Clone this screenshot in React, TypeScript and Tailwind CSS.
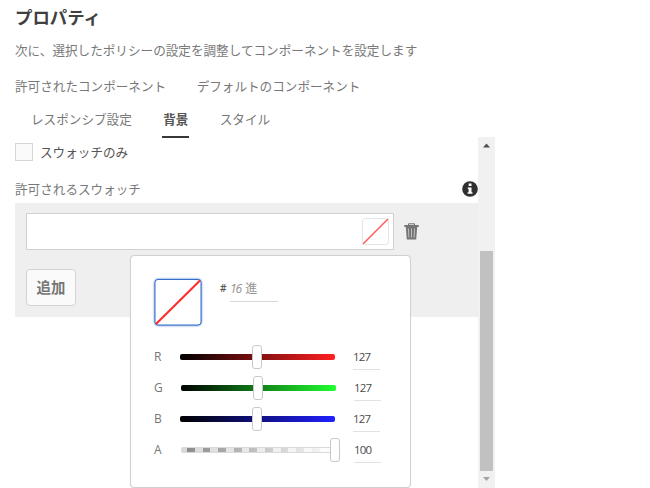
import React from "react";

type Channel = {
  name: string;
  value: number;
  track: string;
  shift: string;
  thumb: string;
};

const channels: Channel[] = [
  { name: "R", value: 127, track: "bg-linear-to-r/srgb from-black to-[#ff2020]", shift: "ml-0", thumb: "left-[72px]" },
  { name: "G", value: 127, track: "bg-linear-to-r/srgb from-black to-[#20ff30]", shift: "ml-px", thumb: "left-[72px]" },
  { name: "B", value: 127, track: "bg-linear-to-r/srgb from-black to-[#2020ff]", shift: "ml-0", thumb: "left-[72px]" },
  { name: "A", value: 100, track: "", shift: "ml-px", thumb: "left-[149px]" },
];

function AlphaTrack() {
  return (
    <div className="relative flex h-[6px] w-full overflow-hidden rounded-[2px] border border-[#dadada] bg-[#dadada]">
      <span className="w-[5px] shrink-0 bg-[#d8d8d8]" />
      {Array.from({ length: 20 }, (_, i) => (
        <span key={i} className={i % 2 ? "w-[7.8px] shrink-0 bg-[#d8d8d8]" : "w-[7.8px] shrink-0 bg-[#888]"} />
      ))}
      <span className="absolute inset-0 bg-linear-to-r/srgb from-white/0 to-white" />
    </div>
  );
}

function ChannelRow({ name, value, track, shift, thumb }: Channel) {
  return (
    <div className="flex h-[31px] items-center">
      <span className="w-[26px] text-[12px] text-[#777]">{name}</span>
      <div className={`relative flex h-6 w-[155px] shrink-0 items-center ${shift}`}>
        {name === "A" ? <AlphaTrack /> : <div className={`h-[6px] w-full rounded-[2px] ${track}`} />}
        <span className={`absolute top-0 h-6 w-[10px] rounded-[3px] border border-[#c8c8c8] bg-white ${thumb}`} />
      </div>
      <span className="ml-[18px] flex h-[27px] w-[27px] items-center border-b border-[#e2e2e2] pt-px text-[11.5px] tracking-[-0.8px] text-[#4b4b4b]">
        {value}
      </span>
    </div>
  );
}

function ColorPopover() {
  return (
    <div className="absolute top-[52px] left-[115px] h-[233px] w-[281px] rounded-[4px] border border-[#d0d0d0] bg-white pt-[22px] pl-[23px] shadow-[0_0_1px_#ddd]">
      <div className="flex">
        <svg className="size-[48px] overflow-visible drop-shadow-[0_0_1px_#3f73d2]" viewBox="0 0 48 48">
          <rect x="1" y="1.5" width="46" height="45.5" rx="3" fill="white" stroke="#326ec8" />
          <path d="M2 46L46 2.5" stroke="#ff2929" strokeWidth="2" />
        </svg>
        <div className="ml-[18px] flex h-[24px] items-center">
          <span className="w-[10px] pb-[3px] text-[10px] font-semibold text-[#555]">#</span>
          <span className="h-full w-[48px] border-b border-[#d8d8d8] pt-[3px] text-[12px] leading-[16px] whitespace-nowrap text-[#929292]">
            <i className="mr-px tracking-[-1px]">16</i> 進
          </span>
        </div>
      </div>
      <div className="mt-[15px]">
        {channels.map((channel) => (
          <ChannelRow key={channel.name} {...channel} />
        ))}
      </div>
    </div>
  );
}

function TrashIcon() {
  return (
    <svg className="ml-[10px] h-[17px] w-[15px]" viewBox="0 0 15 17">
      <path d="M4.5 2V.8h6V2" fill="none" stroke="#707070" />
      <path d="M.3 2h14.4v2H.3zM1.8 4h11.4l-1 12.5H2.8z" fill="#757575" />
      <path d="M4.4 5.5l.5 9M7.5 5.5v9M10.6 5.5l-.5 9" stroke="#c5c5c5" strokeWidth=".9" />
    </svg>
  );
}

function InfoIcon() {
  return (
    <svg className="size-[16px]" viewBox="0 0 16 16">
      <circle cx="8" cy="8" r="7.8" fill="#303030" />
      <path d="M6.7 2.6h2.8v2.5H6.7zM5.8 6.5h3.7v4.8h1v1.5H5.6v-1.5h1V8h-.8z" fill="white" />
    </svg>
  );
}

export default function App() {
  return (
    <main className="flex h-[488px] w-[650px] flex-col overflow-hidden bg-white font-['Open_Sans','Noto_Sans_CJK_JP',sans-serif] text-[12.6px] text-[#787878]">
      <header className="h-[137px] shrink-0 pl-[15px]">
        <h1 className="h-[36px] text-[17.4px] leading-[35px] font-bold text-[#404040]">プロパティ</h1>
        <p className="h-[29px] leading-[29px]">次に、選択したポリシーの設定を調整してコンポーネントを設定します</p>
        <nav className="flex h-[38px] gap-[30.5px] leading-[43px]">
          <span>許可されたコンポーネント</span>
          <span>デフォルトのコンポーネント</span>
        </nav>
        <nav className="flex h-[35px] gap-[30.5px] pl-[16px] leading-[34px]">
          <span>レスポンシブ設定</span>
          <span className="w-[27px] border-b-2 border-[#383838] text-center font-bold text-[#555]">背景</span>
          <span>スタイル</span>
        </nav>
      </header>
      <div className="flex h-[351px] w-[495px]">
        <section className="ml-[15px] w-[463px] shrink-0">
          <div className="flex h-[31px] items-center text-[#555]">
            <span className="mb-px size-[18px] border border-[#d6d6d6] bg-[#fafafa]" />
            <span className="ml-[7px] pt-px">スウォッチのみ</span>
          </div>
          <div className="flex h-[35px] items-end justify-between">
            <span className="h-[27px] leading-[27px]">許可されるスウォッチ</span>
            <span className="flex h-[22px] pr-[0.5px]"><InfoIcon /></span>
          </div>
          <div className="relative h-[114px] bg-[#efefef] px-[11px] pt-[10px]">
            <div className="flex h-[37px] items-center">
              <div className="flex h-full w-[368px] items-center justify-end border border-[#d0d0d0] bg-white pr-[4px]">
                <svg className="size-[27px]" viewBox="0 0 27 27">
                  <rect x=".5" y=".5" width="26" height="26" rx="3" fill="white" stroke="#e4e4e4" />
                  <path d="M1 26L26 1" stroke="#ff5757" strokeWidth="1.5" />
                </svg>
              </div>
              <TrashIcon />
            </div>
            <button className="mt-[19px] h-[37px] w-[50px] rounded-[4px] border border-[#d3d3d3] bg-[#fafafa] text-[14.4px] leading-[33px] font-bold text-[#757575]">
              追加
            </button>
            <ColorPopover />
          </div>
        </section>
        <aside className="flex w-[17px] shrink-0 flex-col items-center bg-[#f1f1f1]">
          <svg className="h-[17px] w-[17px] shrink-0" viewBox="0 0 17 17">
            <path d="M5 10.5L8.5 6.5L12 10.5z" fill="#505050" />
          </svg>
          <div className="mt-[97px] h-[220px] w-[13px] shrink-0 bg-[#c1c1c1]" />
          <svg className="h-[17px] w-[17px] shrink-0" viewBox="0 0 17 17">
            <path d="M5 6L8.5 10L12 6z" fill="#a3a3a3" />
          </svg>
        </aside>
      </div>
    </main>
  );
}
